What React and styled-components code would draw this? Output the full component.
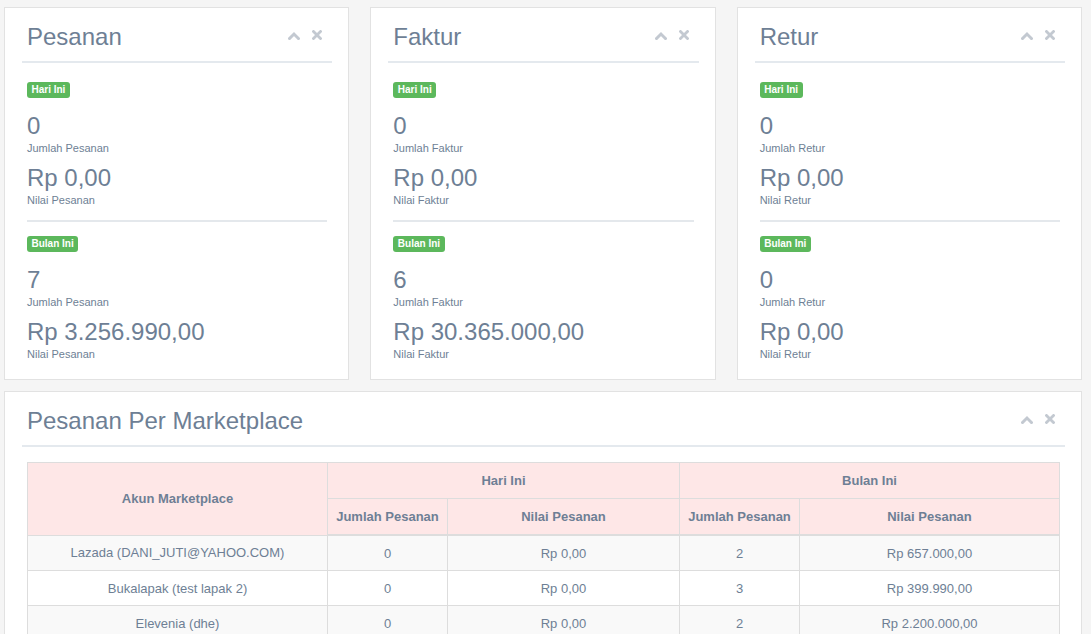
import React from 'react';
import styled, { createGlobalStyle } from 'styled-components';

const GlobalStyle = createGlobalStyle`
  html, body {
    margin: 0;
    padding: 0;
    background: #f5f5f5;
  }
  body {
    font-family: "Liberation Sans", Arial, sans-serif;
    color: #6e7f95;
  }
`;

const summaries = [
  {
    title: 'Pesanan',
    noun: 'Pesanan',
    today: { count: '0', value: 'Rp 0,00' },
    month: { count: '7', value: 'Rp 3.256.990,00' },
  },
  {
    title: 'Faktur',
    noun: 'Faktur',
    today: { count: '0', value: 'Rp 0,00' },
    month: { count: '6', value: 'Rp 30.365.000,00' },
  },
  {
    title: 'Retur',
    noun: 'Retur',
    today: { count: '0', value: 'Rp 0,00' },
    month: { count: '0', value: 'Rp 0,00' },
  },
];

const rows = [
  ['Lazada (DANI_JUTI@YAHOO.COM)', '0', 'Rp 0,00', '2', 'Rp 657.000,00'],
  ['Bukalapak (test lapak 2)', '0', 'Rp 0,00', '3', 'Rp 399.990,00'],
  ['Elevenia (dhe)', '0', 'Rp 0,00', '2', 'Rp 2.200.000,00'],
];

const ChevronUp = () => (
  <svg width="12" height="9" viewBox="0 0 12 9">
    <polyline
      points="1.5,7.5 6,3 10.5,7.5"
      fill="none"
      stroke="#c3c9d1"
      strokeWidth="3"
      strokeLinecap="square"
    />
  </svg>
);

const CloseIcon = () => (
  <svg width="10" height="10" viewBox="0 0 10 10">
    <path
      d="M1.5 1.5 L8.5 8.5 M8.5 1.5 L1.5 8.5"
      stroke="#c3c9d1"
      strokeWidth="2.8"
      strokeLinecap="square"
    />
  </svg>
);

const Widget = ({ title, children }) => (
  <Card>
    <CardHeader>
      <CardTitle>{title}</CardTitle>
      <Tools>
        <ChevronUp />
        <CloseIcon />
      </Tools>
    </CardHeader>
    {children}
  </Card>
);

const Period = ({ label, count, value, noun }) => (
  <div>
    <Badge>{label}</Badge>
    <BigNumber>{count}</BigNumber>
    <SmallLabel>Jumlah {noun}</SmallLabel>
    <BigNumber $gap>{value}</BigNumber>
    <SmallLabel>Nilai {noun}</SmallLabel>
  </div>
);

export default function App() {
  return (
    <>
      <GlobalStyle />
      <Page>
        <SummaryGrid>
          {summaries.map(s => (
            <Widget key={s.noun} title={s.title}>
              <SummaryBody>
                <Period label="Hari Ini" noun={s.noun} {...s.today} />
                <Divider />
                <Period label="Bulan Ini" noun={s.noun} {...s.month} />
              </SummaryBody>
            </Widget>
          ))}
        </SummaryGrid>

        <Widget title="Pesanan Per Marketplace">
          <TableBody>
            <Table>
              <colgroup>
                <col style={{ width: 300 }} />
                <col style={{ width: 120 }} />
                <col style={{ width: 232 }} />
                <col style={{ width: 120 }} />
                <col />
              </colgroup>
              <thead>
                <tr>
                  <Th rowSpan={2}>Akun Marketplace</Th>
                  <Th colSpan={2}>Hari Ini</Th>
                  <Th colSpan={2}>Bulan Ini</Th>
                </tr>
                <tr>
                  <Th $last>Jumlah Pesanan</Th>
                  <Th $last>Nilai Pesanan</Th>
                  <Th $last>Jumlah Pesanan</Th>
                  <Th $last>Nilai Pesanan</Th>
                </tr>
              </thead>
              <tbody>
                {rows.map((r, i) => (
                  <Tr key={r[0]} $striped={i % 2 === 0}>
                    {r.map((c, j) => (
                      <Td key={j}>{c}</Td>
                    ))}
                  </Tr>
                ))}
              </tbody>
            </Table>
          </TableBody>
        </Widget>
      </Page>
    </>
  );
}

const Page = styled.div`
  padding: 7px 9px 0 4px;
  display: flex;
  flex-direction: column;
  gap: 11px;
  height: 634px;
  box-sizing: border-box;
  overflow: hidden;
`;

const SummaryGrid = styled.div`
  display: grid;
  grid-template-columns: repeat(3, 1fr);
  gap: 21px;
`;

const Card = styled.div`
  background: #ffffff;
  border: 1px solid #e2e2e2;
`;

const CardHeader = styled.div`
  margin: 0 16px 0 17px;
  padding: 11px 0 6px 5px;
  border-bottom: 2px solid #e4e9ee;
  display: flex;
  align-items: flex-start;
  justify-content: space-between;
`;

const CardTitle = styled.h4`
  margin: 0;
  font-size: 24px;
  line-height: 36px;
  font-weight: normal;
  color: #6e7f95;
`;

const Tools = styled.div`
  display: flex;
  align-items: center;
  gap: 12px;
  padding: 11px 10px 0 0;
`;

const SummaryBody = styled.div`
  padding: 16px 21px 17px 22px;
`;

const Badge = styled.span`
  display: inline-block;
  height: 16px;
  line-height: 16px;
  padding: 0 4.5px;
  border-radius: 3px;
  background: #5cb85c;
  color: #ffffff;
  font-size: 10px;
  font-weight: bold;
`;

const BigNumber = styled.div`
  margin-top: ${p => (p.$gap ? '9px' : '15px')};
  font-size: 24px;
  line-height: 26px;
  color: #6e7f95;
`;

const SmallLabel = styled.div`
  margin-top: 2px;
  font-size: 11px;
  line-height: 15px;
  color: #6e7f95;
`;

const Divider = styled.div`
  height: 2px;
  background: #e4e8ec;
  margin: 12px 0 11px;
`;

const TableBody = styled.div`
  padding: 15px 21px 0 22px;
`;

const Table = styled.table`
  width: 100%;
  table-layout: fixed;
  border-collapse: collapse;
  font-size: 13px;
`;

const Th = styled.th`
  background: #fee7e7;
  border: 1px solid #dddddd;
  border-bottom-width: ${p => (p.$last ? '2px' : '1px')};
  height: 35px;
  padding: 0 8px;
  font-weight: bold;
  color: #6e7f95;
  text-align: center;
  vertical-align: middle;
`;

const Tr = styled.tr`
  background: ${p => (p.$striped ? '#f9f9f9' : '#ffffff')};
`;

const Td = styled.td`
  border: 1px solid #dddddd;
  height: 34px;
  padding: 0 8px;
  text-align: center;
  vertical-align: middle;
  color: #6e7f95;
`;
